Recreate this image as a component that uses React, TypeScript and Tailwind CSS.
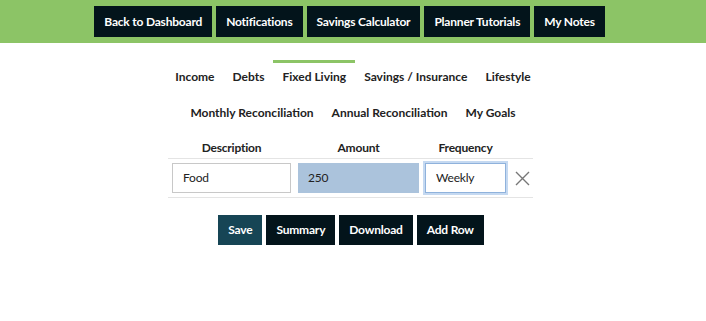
import React from "react";

const topLinks = ["Back to Dashboard", "Notifications", "Savings Calculator", "Planner Tutorials", "My Notes"];
const tabs1 = ["Income", "Debts", "Fixed Living", "Savings / Insurance", "Lifestyle"];
const tabs2 = ["Monthly Reconciliation", "Annual Reconciliation", "My Goals"];

export default function App() {
  return (
    <div className="min-h-[321px] w-full bg-white font-['Lato','Noto_Sans',sans-serif] text-[12px] tracking-[-0.2px] text-[#222]">
      <div className="flex h-[43px] items-start justify-center gap-[4px] bg-[#8cc466] pt-[6px] pr-[7px]">
        {topLinks.map((l) => (
          <button key={l} className="h-[31px] bg-[#03141b] px-[10px] text-[12px] font-bold text-white">
            {l}
          </button>
        ))}
      </div>

      <div className="mt-[17px] flex justify-center tracking-normal">
        {tabs1.map((t) => (
          <div
            key={t}
            className={
              "border-t-[3px] px-[9px] pt-[5px] pb-[11px] font-bold leading-[17px] " +
              (t === "Fixed Living" ? "border-[#8cc466]" : "border-transparent")
            }
          >
            {t}
          </div>
        ))}
      </div>
      <div className="flex justify-center tracking-normal">
        {tabs2.map((t) => (
          <div key={t} className="border-t-[3px] border-transparent px-[9px] pt-[5px] pb-[11px] font-bold leading-[17px]">
            {t}
          </div>
        ))}
      </div>

      <div className="mt-[7px] flex justify-center pr-[5px]">
        <div className="w-[365px]">
          <div className="grid grid-cols-[127px_127px_87px_24px] pb-[2px] font-bold leading-[17px]">
            <div className="text-center">Description</div>
            <div className="text-center">Amount</div>
            <div className="text-center">Frequency</div>
            <div />
          </div>
          <div className="grid grid-cols-[127px_127px_87px_24px] items-center border-y border-[#e4e4e4] py-[4px]">
            <div className="px-[4px]">
              <div className="flex h-[30px] items-center border border-[#c8c8c8] px-[10px] font-normal">Food</div>
            </div>
            <div className="px-[3px]">
              <div className="flex h-[30px] items-center bg-[#abc3dc] px-[10px]">250</div>
            </div>
            <div className="px-[3px]">
              <div className="flex h-[30px] items-center border border-[#8fb2dc] px-[10px] ring-2 ring-[#c5d9f1]">Weekly</div>
            </div>
            <div className="flex justify-center pl-[2px]">
              <svg width="15" height="15" viewBox="0 0 15 15" fill="none" stroke="#777" strokeWidth="1.4">
                <path d="M1 1L14 14M14 1L1 14" />
              </svg>
            </div>
          </div>
        </div>
      </div>

      <div className="mt-[17px] flex justify-center gap-[4px] pr-[4px]">
        <button className="h-[30px] bg-[#164555] px-[10px] font-bold text-white">Save</button>
        <button className="h-[30px] bg-[#03141b] px-[10px] font-bold text-white">Summary</button>
        <button className="h-[30px] bg-[#03141b] px-[10px] font-bold text-white">Download</button>
        <button className="h-[30px] bg-[#03141b] px-[10px] font-bold text-white">Add Row</button>
      </div>
    </div>
  );
}
